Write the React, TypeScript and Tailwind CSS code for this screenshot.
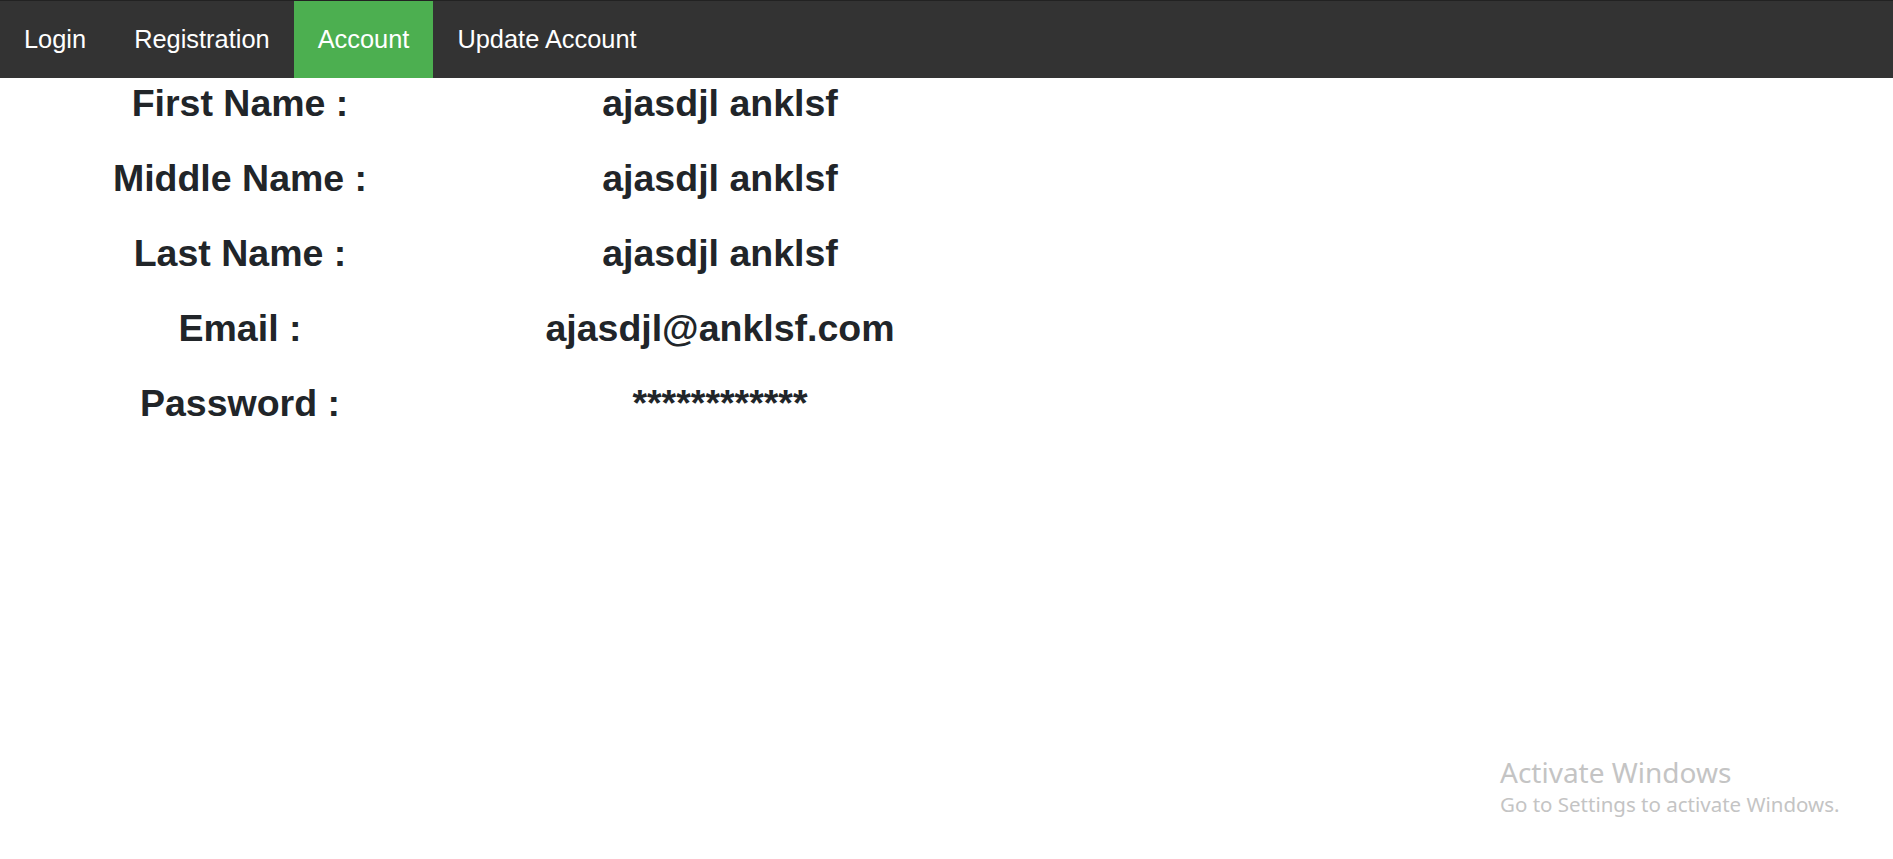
import React from "react";

const links = ["Login", "Registration", "Account", "Update Account"];

const details = [
  { label: "First Name :", value: "ajasdjl anklsf" },
  { label: "Middle Name :", value: "ajasdjl anklsf" },
  { label: "Last Name :", value: "ajasdjl anklsf" },
  { label: "Email :", value: "ajasdjl@anklsf.com" },
  { label: "Password :", value: "************" },
];

const App: React.FC = () => {
  return (
    <div className="relative min-h-[859px] bg-white" style={{ fontFamily: '"Liberation Sans", Arial, sans-serif' }}>
      <nav className="flex border-t border-[#222] bg-[#333]">
        {links.map((link) => (
          <a
            key={link}
            href="#"
            className={
              link === "Account"
                ? "bg-[#4caf50] px-[24px] py-[24px] text-[25.4px] leading-[29px] text-white"
                : "px-[24px] py-[24px] text-[25.4px] leading-[29px] text-white"
            }
          >
            {link}
          </a>
        ))}
      </nav>

      <div className="flex flex-col gap-y-[30px] pt-[3px]">
        {details.map((row) => (
          <div key={row.label} className="flex">
            <h4 className="w-[480px] text-center text-[37.5px] font-bold leading-[45px] text-[#212529]">
              {row.label}
            </h4>
            <h4 className="w-[480px] text-center text-[37.5px] font-bold leading-[45px] text-[#212529]">
              {row.value}
            </h4>
          </div>
        ))}
      </div>

      {/* windows watermark */}
      <div
        className="absolute left-[1500px] top-[757px] text-[#c4c4c4]"
        style={{ fontFamily: '"Noto Sans", "Open Sans", sans-serif' }}
      >
        <div className="text-[28px] leading-[30px]">Activate Windows</div>
        <div className="text-[20.5px] leading-[35px]">Go to Settings to activate Windows.</div>
      </div>
    </div>
  );
};

export default App;
